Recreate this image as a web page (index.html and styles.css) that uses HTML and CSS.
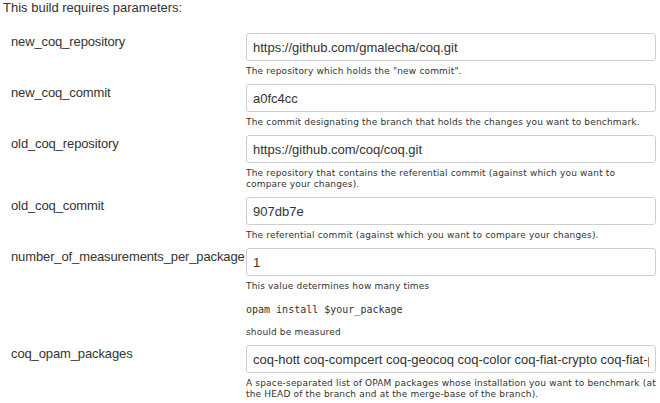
FILE: index.html
```html
<!DOCTYPE html>
<html>
<head>
<meta charset="utf-8">
<link rel="stylesheet" href="styles.css">
</head>
<body>
<div class="page">
  <p class="intro">This build requires parameters:</p>
  <div class="params">
    <div class="label">new_coq_repository</div>
    <div class="value">
      <input class="field" type="text" value="https://github.com/gmalecha/coq.git">
      <div class="desc">The repository which holds the "new commit".</div>
    </div>

    <div class="label">new_coq_commit</div>
    <div class="value">
      <input class="field" type="text" value="a0fc4cc">
      <div class="desc">The commit designating the branch that holds the changes you want to benchmark.</div>
    </div>

    <div class="label">old_coq_repository</div>
    <div class="value">
      <input class="field" type="text" value="https://github.com/coq/coq.git">
      <div class="desc">The repository that contains the referential commit (against which you want to<br>compare your changes).</div>
    </div>

    <div class="label">old_coq_commit</div>
    <div class="value">
      <input class="field" type="text" value="907db7e">
      <div class="desc">The referential commit (against which you want to compare your changes).</div>
    </div>

    <div class="label">number_of_measurements_per_package</div>
    <div class="value">
      <input class="field" type="text" value="1">
      <div class="desc">This value determines how many times
        <pre class="code">opam install $your_package</pre>
        should be measured</div>
    </div>

    <div class="label">coq_opam_packages</div>
    <div class="value">
      <input class="field" type="text" value="coq-hott coq-compcert coq-geocoq coq-color coq-fiat-crypto coq-fiat-parsers coq-fiat-core coq-unimath coq-sf">
      <div class="desc">A space-separated list of OPAM packages whose installation you want to benchmark (at<br>the HEAD of the branch and at the merge-base of the branch).</div>
    </div>
  </div>
</div>
</body>
</html>
```

FILE: styles.css
```css
html, body {
  margin: 0;
  padding: 0;
  background: #ffffff;
}

.page {
  font-family: "Liberation Sans", Arial, sans-serif;
  font-size: 13px;
  color: #333333;
}

.intro {
  margin: 0;
  padding: 0 3px;
  line-height: 15px;
  height: 33px;
}

.params {
  display: grid;
  grid-template-columns: 246px 1fr;
  padding-right: 4px;
}

.label {
  padding: 1px 0 0 11px;
  line-height: 15px;
  white-space: nowrap;
  letter-spacing: -0.12px;
}

.value {
  padding-bottom: 7px;
}

.field {
  display: block;
  box-sizing: border-box;
  width: 100%;
  height: 28px;
  margin: 0;
  padding: 0 6px;
  border: 1px solid #cfcfcf;
  border-radius: 3px;
  font-family: "Liberation Sans", Arial, sans-serif;
  font-size: 13px;
  color: #333333;
  background: #ffffff;
}

.desc {
  margin-top: 5px;
  font-family: "DejaVu Sans", Verdana, sans-serif;
  font-size: 9px;
  line-height: 11px;
  letter-spacing: 0.17px;
  white-space: nowrap;
  color: #333333;
}

.code {
  margin: 12px 0 11px;
  font-family: "DejaVu Sans Mono", monospace;
  font-size: 10px;
  line-height: 12px;
  letter-spacing: 0;
}
```
